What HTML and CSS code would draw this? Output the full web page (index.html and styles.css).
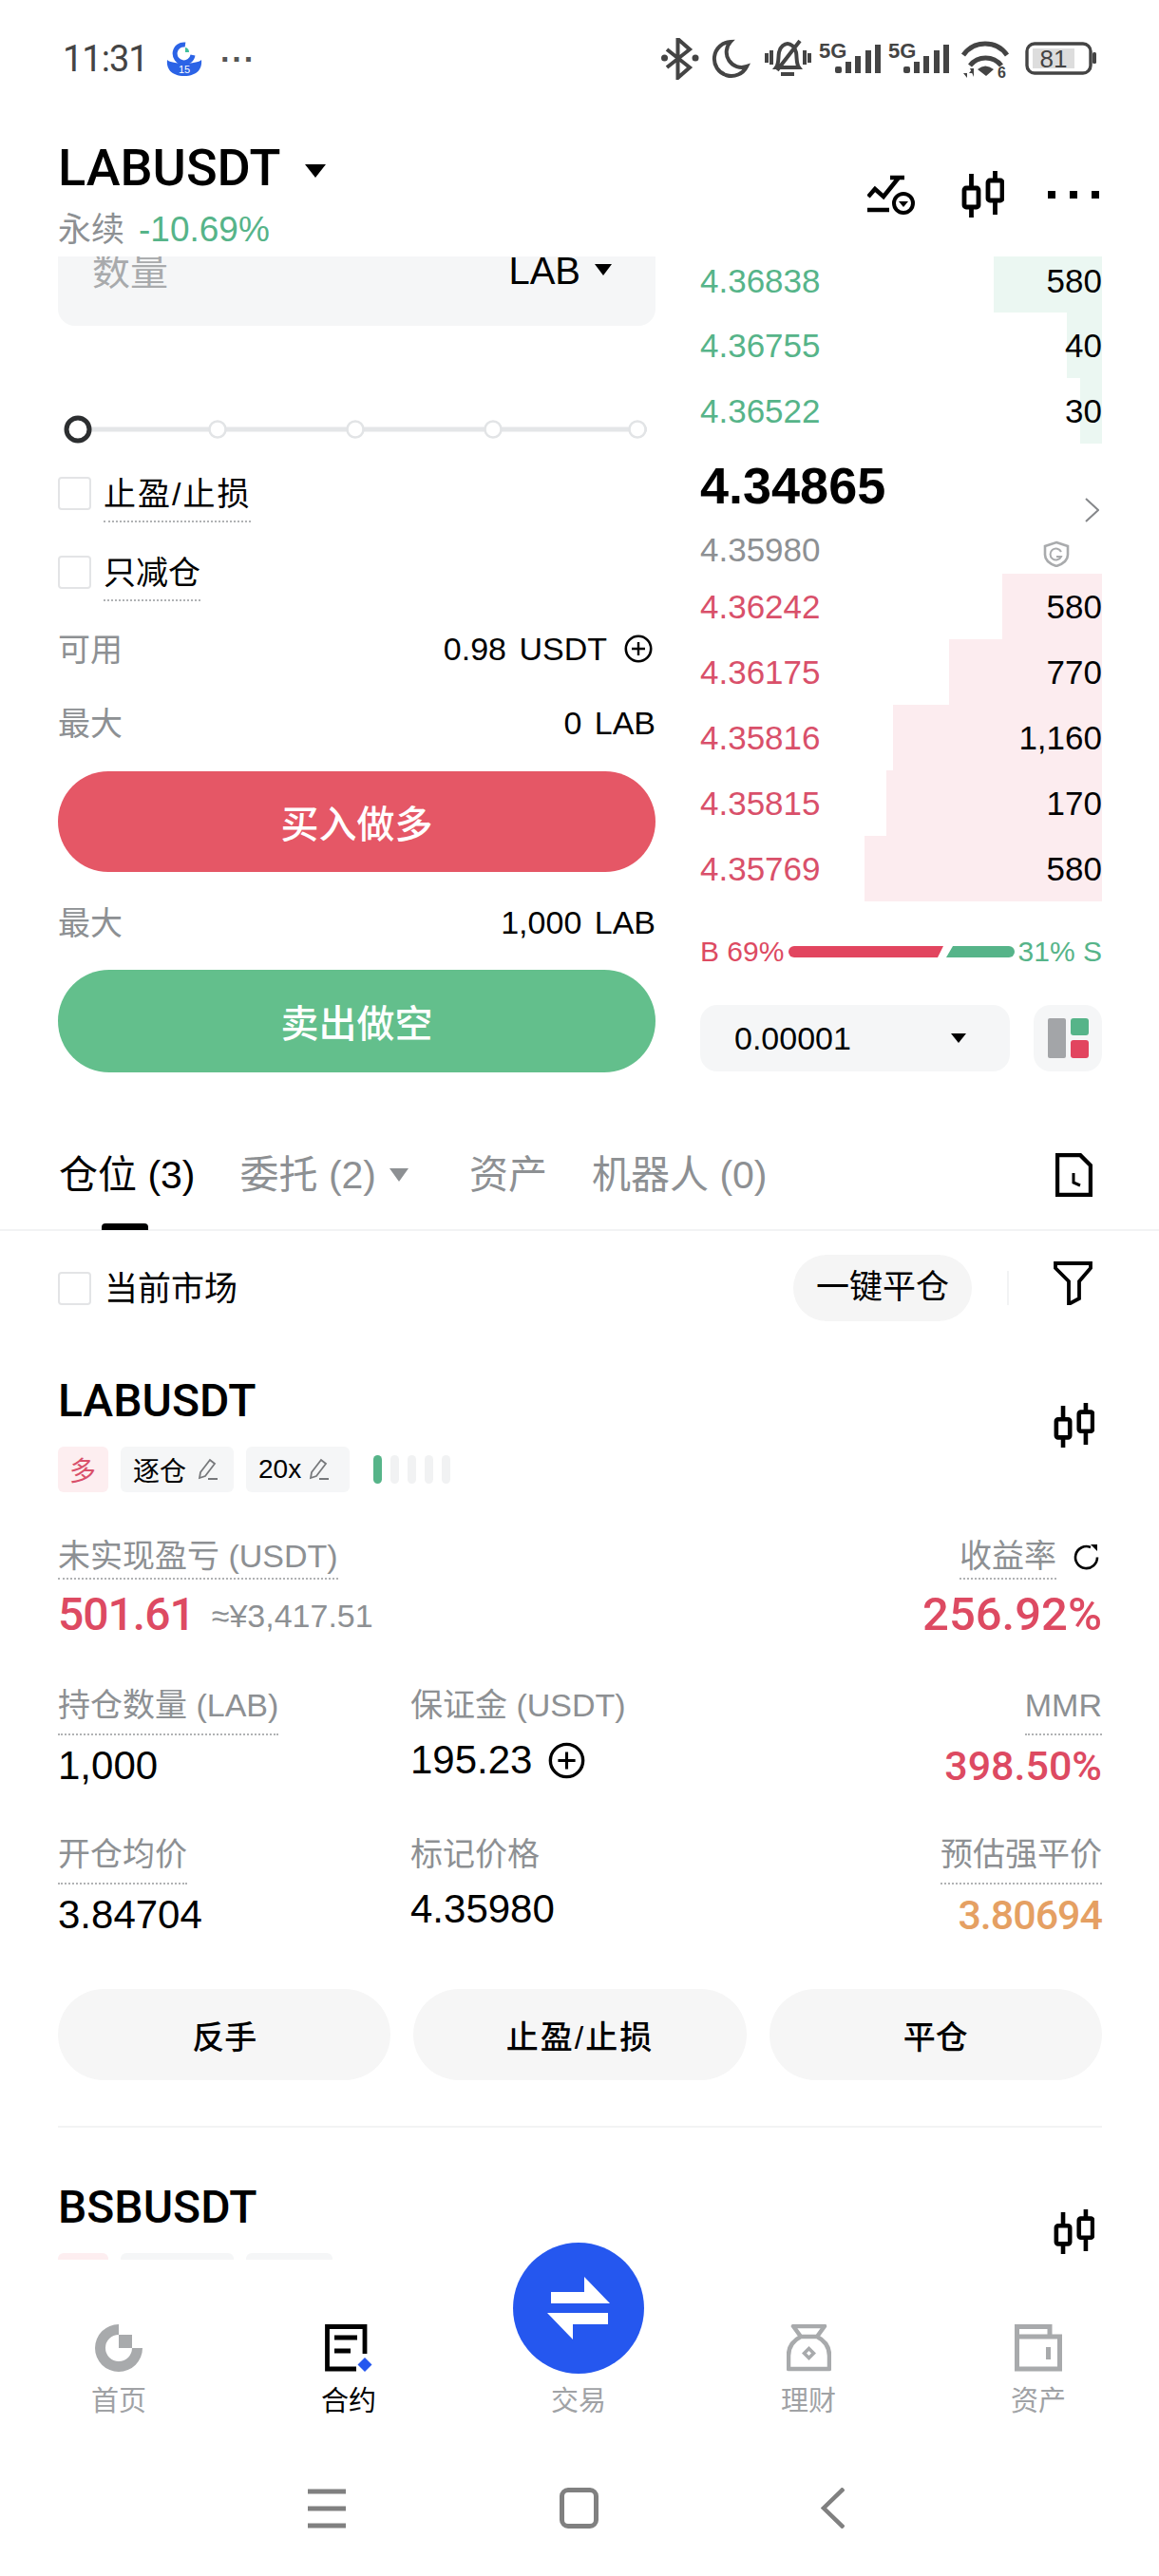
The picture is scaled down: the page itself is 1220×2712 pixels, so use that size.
FILE: index.html
```html
<!DOCTYPE html>
<html lang="zh-CN">
<head>
<meta charset="UTF-8">
<meta name="viewport" content="width=device-width, initial-scale=1.0">
<title>LABUSDT 永续</title>
<link rel="stylesheet" href="styles.css">
</head>
<body>
<svg class="defs" width="0" height="0">
    <symbol id="candles" viewBox="0 0 45 49">
        <g fill="none" stroke="#000" stroke-width="4.800">
            <rect x="3" y="18" width="15" height="20" rx="2"/>
            <rect x="28" y="10" width="15" height="21" rx="2"/>
            <path d="M10.500 3V18M10.500 38V49M35.500 0V10M35.500 31V46"/>
        </g>
    </symbol>
    <symbol id="pencil" viewBox="0 0 22 24">
        <path d="M3 15 13 2l5 4L8 19l-6 2zM11 22h10" fill="none" stroke="#77797c" stroke-width="1.800"/>
    </symbol>
    <symbol id="plus" viewBox="0 0 30 30">
        <circle cx="15" cy="15" r="13.200" fill="none" stroke="#000" stroke-width="2.600"/>
        <path d="M15 8v14M8 15h14" stroke="#000" stroke-width="2.400"/>
    </symbol>
</svg>

<div class="page">
    <div class="status">
        <span class="time">11:31</span>
        <svg class="app-icon" width="38" height="36" viewBox="0 0 38 36">
            <path d="M20 3A9.500 9.500 0 1 0 28 14" fill="none" stroke="#2b63e6" stroke-width="5"/>
            <path d="M20 6a5 5 0 0 1 4 5h-4z" fill="#3fbf9b"/>
            <path d="M1 19c5 5 31 5 36 0 1 9-4 17-18 17S0 28 1 19z" fill="#2b63e6"/>
            <text x="19" y="33" class="app-icon-text">15</text>
        </svg>
        <span class="status-dots">···</span>
        <svg class="status-icons" width="460" height="44" viewBox="0 0 460 44">
            <g fill="none" stroke="#444" stroke-width="4">
                <path d="M6 12 30 31 17.500 42V1L30 12 6 31"/>
                <path d="M73 4A18 18 0 1 0 90 30 16 16 0 0 1 73 4z"/>
                <path d="M121 31c3-4 2-10 3-16 1-6 6-9 9-9s8 3 9 9c1 6 0 12 3 16zM126 38h14M146 3 122 34M111 16v10M116 13v15M151 13v15M156 16v10"/>
                <path d="M318 18a28 28 0 0 1 46 0M325 29a21 21 0 0 1 33 0" stroke-width="5"/>
                <rect x="385" y="6" width="67" height="31" rx="8" stroke-width="3.400"/>
            </g>
            <g fill="#444">
                <circle cx="3.500" cy="21" r="3.500"/>
                <circle cx="36" cy="21" r="3.500"/>
                <rect x="183" y="30" width="7" height="7" rx="2"/>
                <rect x="194" y="25" width="6" height="12"/>
                <rect x="204" y="19" width="6" height="18"/>
                <rect x="215" y="13" width="6" height="24"/>
                <rect x="225" y="7" width="6" height="30"/>
                <rect x="255" y="30" width="7" height="7" rx="2"/>
                <rect x="266" y="25" width="6" height="12"/>
                <rect x="276" y="19" width="6" height="18"/>
                <rect x="287" y="13" width="6" height="24"/>
                <rect x="297" y="7" width="6" height="30"/>
                <path d="M333 33q8-7 17 0l-8 7zM318 37h4v5zM328 32v5h-4zM325 32h4v9z"/>
                <rect x="454" y="15" width="4" height="12" rx="1.500"/>
                <text x="166" y="21" class="status-text">5G</text>
                <text x="239" y="21" class="status-text">5G</text>
                <text x="354" y="42" class="status-six">6</text>
            </g>
            <rect x="391" y="11" width="44" height="21" fill="#ddd"/>
            <text x="413" y="31" class="battery-text">81</text>
        </svg>
    </div>

    <div class="header">
        <div class="header-left">
            <div class="title">LABUSDT <i class="caret caret-title"></i></div>
            <div class="subtitle">永续<span class="green change">-10.69%</span></div>
        </div>
        <div class="header-icons">
            <svg class="trend-icon" width="50" height="42" viewBox="0 0 50 42">
                <path d="M1 23 8 15 17 23 33 3M24 3H39M0 37H23" fill="none" stroke="#000" stroke-width="4.500"/>
                <circle cx="38" cy="30" r="10" fill="none" stroke="#000" stroke-width="4"/>
                <path d="M33 28h10l-5 6z"/>
            </svg>
            <svg width="45" height="49"><use href="#candles"/></svg>
            <svg width="54" height="10" viewBox="0 0 54 10">
                <rect x="0" y="1" width="8" height="8"/><rect x="23" y="1" width="8" height="8"/><rect x="46" y="1" width="8" height="8"/>
            </svg>
        </div>
    </div>

    <div class="trade">
        <div class="form">
            <div class="qty-box">
                <span class="qty-label">数量</span>
                <span class="qty-unit">LAB <i class="caret caret-small"></i></span>
            </div>
            <svg class="slider" width="629" height="30" viewBox="0 0 629 30">
                <path d="M20 15H620" stroke="#e4e6e8" stroke-width="5"/>
                <circle cx="21" cy="15" r="12" fill="#fff" stroke="#2c2e30" stroke-width="5"/>
                <circle cx="168" cy="15" r="8.500" fill="#fff" stroke="#e2e4e6" stroke-width="2.500"/>
                <circle cx="313" cy="15" r="8.500" fill="#fff" stroke="#e2e4e6" stroke-width="2.500"/>
                <circle cx="458" cy="15" r="8.500" fill="#fff" stroke="#e2e4e6" stroke-width="2.500"/>
                <circle cx="610" cy="15" r="8.500" fill="#fff" stroke="#e2e4e6" stroke-width="2.500"/>
            </svg>
            <div class="check-row first-check"><span class="checkbox"></span><span class="dotted check-label wide-slash">止盈/止损</span></div>
            <div class="check-row second-check"><span class="checkbox"></span><span class="dotted check-label">只减仓</span></div>
            <div class="info-row avail-row">
                <span class="muted">可用</span>
                <span class="info-value">0.98 USDT<svg class="avail-plus" width="30" height="30"><use href="#plus"/></svg></span>
            </div>
            <div class="info-row max-row">
                <span class="muted">最大</span>
                <span class="info-value">0 LAB</span>
            </div>
            <div class="big-btn btn-buy">买入做多</div>
            <div class="info-row max-row-2">
                <span class="muted">最大</span>
                <span class="info-value">1,000 LAB</span>
            </div>
            <div class="big-btn btn-sell">卖出做空</div>
        </div>

        <div class="book">
            <div class="book-row ask first-row"><i class="depth depth-ask" style="width:114px"></i><span class="price">4.36838</span><span class="qty">580</span></div>
            <div class="book-row ask"><i class="depth depth-ask" style="width:37px"></i><span class="price">4.36755</span><span class="qty">40</span></div>
            <div class="book-row ask"><i class="depth depth-ask" style="width:23px"></i><span class="price">4.36522</span><span class="qty">30</span></div>
            <div class="mid">
                <div class="mid-top">
                    <span class="last-price">4.34865</span>
                    <svg class="chevron" width="15" height="26" viewBox="0 0 15 26"><path d="M1 1 14 13 1 25" fill="none" stroke="#85878a" stroke-width="2"/></svg>
                </div>
                <div class="mid-bottom">
                    <span class="mark-price">4.35980</span>
                    <svg class="shield" width="28" height="28" viewBox="0 0 28 28">
                        <path d="M14 2 26 6v9c0 6-6 10-12 12C8 25 2 21 2 15V6z" fill="none" stroke="#a9abad" stroke-width="2.600"/>
                        <path d="M19 12a6 6 0 1 0 0 5h-5" fill="none" stroke="#a9abad" stroke-width="2"/>
                    </svg>
                </div>
            </div>
            <div class="book-row bid"><i class="depth depth-bid" style="width:105px"></i><span class="price">4.36242</span><span class="qty">580</span></div>
            <div class="book-row bid"><i class="depth depth-bid" style="width:161px"></i><span class="price">4.36175</span><span class="qty">770</span></div>
            <div class="book-row bid"><i class="depth depth-bid" style="width:220px"></i><span class="price">4.35816</span><span class="qty">1,160</span></div>
            <div class="book-row bid"><i class="depth depth-bid" style="width:227px"></i><span class="price">4.35815</span><span class="qty">170</span></div>
            <div class="book-row bid"><i class="depth depth-bid" style="width:250px"></i><span class="price">4.35769</span><span class="qty">580</span></div>
            <div class="ratio">
                <span class="red">B 69%</span>
                <svg class="ratio-bar" width="238" height="12" viewBox="0 0 238 12">
                    <path d="M6 0H163L157 12H6A6 6 0 0 1 6 0z" fill="#e2455f"/>
                    <path d="M173 0H232A6 6 0 0 1 232 12H166z" fill="#56b489"/>
                </svg>
                <span class="green">31% S</span>
            </div>
            <div class="book-tools">
                <div class="tick-select"><span>0.00001</span><i class="caret caret-tick"></i></div>
                <div class="layout-btn">
                    <svg width="43" height="42" viewBox="0 0 43 42">
                        <rect x="0" y="0" width="19" height="42" rx="2" fill="#a3a5a8"/>
                        <rect x="24" y="0" width="19" height="18" rx="3" fill="#56b489"/>
                        <rect x="24" y="23" width="19" height="19" rx="3" fill="#e2455f"/>
                    </svg>
                </div>
            </div>
        </div>
    </div>

    <div class="tabs">
        <span class="tab tab-on">仓位 (3)</span>
        <span class="tab tab-orders">委托 (2)<i class="caret caret-tab"></i></span>
        <span class="tab">资产</span>
        <span class="tab">机器人 (0)</span>
        <svg class="doc-icon" width="39" height="46" viewBox="0 0 39 46">
            <path d="M2 2H26L37 13V44H2z" fill="none" stroke="#000" stroke-width="4.400"/>
            <path d="M19 21V31L26 34" fill="none" stroke="#000" stroke-width="3"/>
        </svg>
        <i class="tab-line"></i>
    </div>

    <div class="positions">
        <div class="filter-row">
            <span class="checkbox"></span>
            <span class="filter-label">当前市场</span>
            <span class="pill">一键平仓</span>
            <i class="filter-sep"></i>
            <svg class="filter-icon" width="41" height="46" viewBox="0 0 41 46">
                <path d="M2 2H39V7L27 21V39L16 45V21L2 7z" fill="none" stroke="#000" stroke-width="3.800"/>
            </svg>
        </div>

        <div class="pos-head">
            <span class="symbol">LABUSDT</span>
            <svg class="pos-candles" width="43" height="49"><use href="#candles"/></svg>
        </div>
        <div class="tags">
            <span class="tag tag-long">多</span>
            <span class="tag tag-iso">逐仓<svg width="22" height="24"><use href="#pencil"/></svg></span>
            <span class="tag tag-lev">20x<svg width="22" height="24"><use href="#pencil"/></svg></span>
            <span class="risk"><i class="risk-on"></i><i></i><i></i><i></i><i></i></span>
        </div>

        <div class="stats">
            <div class="stat">
                <span class="dotted stat-label short-line">未实现盈亏 (USDT)</span>
                <div class="pnl-line"><span class="pnl pnl-tight red">501.61</span><span class="pnl-cny">≈¥3,417.51</span></div>
            </div>
            <div></div>
            <div class="stat stat-right">
                <span class="roe-line"><span class="dotted stat-label short-line">收益率</span>
                    <svg class="refresh" width="29" height="29" viewBox="0 0 29 29">
                        <path d="M19 4A11.500 11.500 0 1 0 26 14.500" fill="none" stroke="#000" stroke-width="2.600"/>
                        <path d="M19 1h7v7z"/>
                    </svg>
                </span>
                <div class="pnl red">256.92%</div>
            </div>

            <div class="stat">
                <span class="dotted stat-label">持仓数量 (LAB)</span>
                <div class="stat-value">1,000</div>
            </div>
            <div class="stat">
                <span class="stat-label plain">保证金 (USDT)</span>
                <div class="stat-value value-mid">195.23<svg class="margin-plus" width="39" height="39"><use href="#plus"/></svg></div>
            </div>
            <div class="stat stat-right">
                <span class="dotted stat-label">MMR</span>
                <div class="stat-value strong red">398.50%</div>
            </div>

            <div class="stat">
                <span class="dotted stat-label">开仓均价</span>
                <div class="stat-value">3.84704</div>
            </div>
            <div class="stat">
                <span class="stat-label plain">标记价格</span>
                <div class="stat-value value-mid">4.35980</div>
            </div>
            <div class="stat stat-right">
                <span class="dotted stat-label">预估强平价</span>
                <div class="stat-value strong orange">3.80694</div>
            </div>
        </div>

        <div class="pos-actions">
            <span class="action">反手</span>
            <span class="action wide-slash">止盈/止损</span>
            <span class="action">平仓</span>
        </div>
        <div class="pos-divider"></div>

        <div class="pos-head">
            <span class="symbol">BSBUSDT</span>
            <svg class="pos-candles" width="43" height="49"><use href="#candles"/></svg>
        </div>
        <div class="tags">
            <span class="tag tag-long"></span>
            <span class="tag tag-iso"></span>
            <span class="tag tag-lev tag-short"></span>
        </div>
    </div>

    <div class="nav">
        <div class="swap-btn">
            <svg width="66" height="66" viewBox="0 0 66 66">
                <path d="M4 16H39V0L66 28H4z M0 38H64V50H27V66z" fill="#fff"/>
            </svg>
        </div>
        <div class="nav-tabs">
            <div class="nav-item">
                <svg width="50" height="50" viewBox="0 0 50 50" fill="#a8aaac">
                    <path d="M25 0A25 25 0 1 0 50 25H39A14 14 0 1 1 25 11z"/>
                    <rect x="25" y="11" width="14" height="14"/>
                </svg>
                <span>首页</span>
            </div>
            <div class="nav-item nav-on">
                <svg width="50" height="50" viewBox="0 0 50 50">
                    <path d="M42 31V2.500H2.500V47H33" fill="none" stroke="#000" stroke-width="4.800"/>
                    <path d="M10 14H34M10 28H27" stroke="#000" stroke-width="5"/>
                    <path d="M42 35 49.500 42.500 42 50 34.500 42.500z" fill="#2557ef"/>
                </svg>
                <span>合约</span>
            </div>
            <div class="nav-item">
                <i class="nav-spacer"></i>
                <span>交易</span>
            </div>
            <div class="nav-item">
                <svg width="47" height="50" viewBox="0 0 47 50">
                    <path d="M7 2H40L32 13C40 17 45 23 45 33V47H2V33C2 23 7 17 15 13z M15 13H32" fill="none" stroke="#a8aaac" stroke-width="4.500" stroke-linejoin="round"/>
                    <path d="M23.500 23 31 30.500 23.500 38 16 30.500z" fill="#a8aaac"/>
                    <path d="M23.500 28 26 30.500 23.500 33 21 30.500z" fill="#fff"/>
                </svg>
                <span>理财</span>
            </div>
            <div class="nav-item">
                <svg width="50" height="50" viewBox="0 0 50 50">
                    <path d="M2.500 2.500H37V13H47.500V47H2.500zM2.500 13H37" fill="none" stroke="#a8aaac" stroke-width="5"/>
                    <rect x="33" y="24" width="5" height="13" fill="#a8aaac"/>
                </svg>
                <span>资产</span>
            </div>
        </div>
        <div class="sys-nav">
            <svg width="40" height="42" viewBox="0 0 40 42">
                <path d="M0 3H40M0 21H40M0 39H40" stroke="#808080" stroke-width="5"/>
            </svg>
            <i class="sys-home"></i>
            <svg class="sys-back" width="25" height="43" viewBox="0 0 25 43">
                <path d="M24 1 3 21.500 24 42" fill="none" stroke="#808080" stroke-width="4.500"/>
            </svg>
        </div>
    </div>
</div>
</body>
</html>
```
FILE: styles.css
```css
body {
    margin: 0;
    padding: 0;
    font-family: "Liberation Sans", "Noto Sans CJK SC", sans-serif;
    background: #fff;
    color: #000;
}

i {
    display: block;
}

svg {
    display: block;
    flex-shrink: 0;
}

.defs {
    position: absolute;
}

.page {
    width: 1220px;
    height: 2712px;
    overflow: hidden;
    display: flex;
    flex-direction: column;
}

.green {
    color: #56b489;
}

.red {
    color: #dd4a62;
}

.orange {
    color: #e5a063;
    letter-spacing: -1px;
}

.muted {
    color: #8d9093;
}

.caret {
    width: 0;
    height: 0;
    border-left: 10px solid transparent;
    border-right: 10px solid transparent;
    border-top: 14px solid #000;
}

.wide-slash {
    letter-spacing: 2px;
}

/* status bar */
.status {
    height: 96px;
    padding: 14px 66px 0 66px;
    display: flex;
    align-items: center;
}

.time {
    font-family: Roboto, "Liberation Sans", sans-serif;
    font-size: 38px;
    letter-spacing: -1px;
    color: #444;
    width: 109px;
}

.app-icon-text {
    font-size: 11px;
    fill: #fff;
    text-anchor: middle;
}

.status-dots {
    font-size: 34px;
    font-weight: bold;
    color: #555;
    margin-left: 19px;
    letter-spacing: 1px;
}

.status-icons {
    margin-left: auto;
    margin-right: -2px;
}

.status-text {
    font-size: 22px;
    font-weight: bold;
}

.status-six {
    font-size: 16px;
    font-weight: bold;
}

.battery-text {
    font-size: 26px;
    fill: #444;
    text-anchor: middle;
}

/* header */
.header {
    height: 160px;
    padding: 39px 63px 0 61px;
    box-sizing: border-box;
    display: flex;
    justify-content: space-between;
}

.title {
    font-family: Roboto, "Liberation Sans", sans-serif;
    font-size: 54px;
    font-weight: 500;
    line-height: 56px;
    display: flex;
    align-items: center;
}

.caret-title {
    margin-left: 26px;
    margin-top: 6px;
    border-left-width: 11px;
    border-right-width: 11px;
}

.subtitle {
    font-size: 35px;
    line-height: 40px;
    margin-top: 17px;
    color: #8d9093;
}

.change {
    font-size: 37px;
    margin-left: 15px;
}

.header-icons {
    display: flex;
    align-items: center;
    margin-top: 31px;
    height: 49px;
    gap: 46px;
}

.trend-icon {
    margin-right: 3px;
}

/* order form and book */
.trade {
    height: 859px;
    padding: 0 60px 0 61px;
    display: flex;
    justify-content: space-between;
}

.form {
    width: 629px;
}

.qty-box {
    height: 73px;
    box-sizing: border-box;
    padding: 0 46px 0 36px;
    background: #f5f6f7;
    border-radius: 0 0 18px 18px;
    display: flex;
    justify-content: space-between;
    font-size: 36px;
    line-height: 32px;
    overflow: hidden;
}

.qty-label {
    color: #a8aaac;
    font-size: 40px;
}

.qty-unit {
    font-size: 40px;
    line-height: 30px;
    display: flex;
}

.caret-small {
    margin-left: 15px;
    margin-top: 8px;
    border-left-width: 9px;
    border-right-width: 9px;
    border-top-width: 12px;
}

.slider {
    margin-top: 94px;
}

.check-row {
    display: flex;
    align-items: flex-start;
}

.first-check {
    margin-top: 35px;
}

.second-check {
    margin-top: 35px;
}

.checkbox {
    width: 35px;
    height: 35px;
    box-sizing: border-box;
    border: 2px solid #e3e4e6;
    border-radius: 4px;
    display: block;
    flex-shrink: 0;
}

.dotted {
    border-bottom: 2px dotted #b0b2b4;
}

.check-label {
    margin-left: 13px;
    font-size: 34px;
    line-height: 36px;
    padding-bottom: 10px;
}

.info-row {
    display: flex;
    justify-content: space-between;
    align-items: center;
    height: 40px;
    font-size: 34px;
}

.avail-row {
    margin-top: 28px;
}

.max-row {
    margin-top: 38px;
}

.max-row-2 {
    margin-top: 31px;
}

.info-value {
    display: flex;
    align-items: center;
    word-spacing: 4px;
    padding-top: 4px;
}

.avail-plus {
    margin-left: 18px;
    margin-right: 3px;
}

.big-btn {
    height: 107px;
    border-radius: 54px;
    color: #fff;
    font-size: 40px;
    font-weight: 500;
    display: flex;
    align-items: center;
    justify-content: center;
}

.btn-buy {
    height: 106px;
    background: #e55766;
    margin-top: 33px;
}

.btn-sell {
    height: 108px;
    background: #63bf8c;
    margin-top: 32px;
}

.book {
    width: 423px;
}

.book-row {
    position: relative;
    height: 69px;
    display: flex;
    justify-content: space-between;
    align-items: center;
    font-size: 35px;
}

.first-row {
    padding-bottom: 7px;
    height: 52px;
}

.ask .price {
    color: #56b489;
}

.bid .price {
    color: #d9506a;
}

.price,
.qty {
    position: relative;
}

.depth {
    position: absolute;
    top: 0;
    right: 0;
    bottom: 0;
}

.depth-ask {
    background: #ebf7f2;
}

.depth-bid {
    background: #fcecef;
}

.mid {
    height: 137px;
}

.mid-top {
    padding-top: 16px;
    display: flex;
    justify-content: space-between;
}

.last-price {
    font-size: 54px;
    font-weight: bold;
    line-height: 56px;
}

.chevron {
    margin-top: 41px;
    margin-right: 3px;
}

.mid-bottom {
    margin-top: 9px;
    display: flex;
    justify-content: space-between;
    align-items: center;
    height: 40px;
}

.mark-price {
    font-size: 35px;
    color: #8d9093;
}

.shield {
    margin-right: 34px;
    margin-top: 8px;
}

.ratio {
    margin-top: 33px;
    height: 40px;
    display: flex;
    justify-content: space-between;
    align-items: center;
    font-size: 30px;
    white-space: nowrap;
}

.ratio-bar {
    margin: 0 4px;
}

.book-tools {
    margin-top: 36px;
    display: flex;
    justify-content: space-between;
}

.tick-select {
    width: 326px;
    height: 70px;
    box-sizing: border-box;
    padding: 0 46px 0 36px;
    background: #f5f6f7;
    border-radius: 18px;
    display: flex;
    justify-content: space-between;
    align-items: center;
    font-size: 34px;
}

.caret-tick {
    border-left-width: 8px;
    border-right-width: 8px;
    border-top-width: 10px;
}

.layout-btn {
    width: 72px;
    height: 70px;
    background: #f5f6f7;
    border-radius: 18px;
    display: flex;
    align-items: center;
    justify-content: center;
}

/* tabs */
.tabs {
    position: relative;
    height: 167px;
    box-sizing: border-box;
    padding: 85px 70px 0 62px;
    border-bottom: 2px solid #f2f3f4;
    display: flex;
    align-items: flex-start;
    gap: 47px;
    font-size: 41px;
    line-height: 46px;
    color: #8d9093;
}

.tab {
    white-space: nowrap;
    display: flex;
    align-items: center;
}

.tab-on {
    color: #000;
}

.tab-orders {
    margin-right: 17px;
}

.caret-tab {
    margin-left: 14px;
    border-top-color: #8d9093;
}

.doc-icon {
    margin-left: auto;
}

.tab-line {
    position: absolute;
    left: 107px;
    bottom: -1px;
    width: 49px;
    height: 7px;
    background: #000;
    border-radius: 4px 4px 0 0;
}

/* positions */
.positions {
    flex: 1;
    min-height: 0;
    overflow: hidden;
    padding: 0 60px 0 61px;
}

.filter-row {
    margin-top: 25px;
    height: 70px;
    display: flex;
    align-items: center;
    padding-right: 10px;
}

.filter-label {
    margin-left: 14px;
    margin-top: -5px;
    font-size: 35px;
}

.pill {
    margin-left: auto;
    height: 70px;
    padding: 0 24px;
    background: #f5f5f5;
    border-radius: 35px;
    font-size: 35px;
    line-height: 68px;
}

.filter-sep {
    width: 2px;
    height: 36px;
    margin: 0 47px 0 37px;
    background: #f2f3f4;
}

.filter-icon {
    margin-top: -10px;
}

.pos-head {
    margin-top: 59px;
    height: 73px;
    display: flex;
    justify-content: space-between;
}

.symbol {
    font-family: Roboto, "Liberation Sans", sans-serif;
    font-size: 48px;
    font-weight: 500;
    line-height: 50px;
}

.pos-candles {
    margin-top: 26px;
    margin-right: 8px;
}

.tags {
    display: flex;
    align-items: center;
    gap: 13px;
    height: 48px;
}

.tag {
    height: 48px;
    box-sizing: border-box;
    padding: 0 13px;
    border-radius: 6px;
    background: #f5f6f7;
    font-size: 28px;
    display: flex;
    align-items: center;
    gap: 12px;
}

.tag-long {
    width: 53px;
    background: #fdeef0;
    color: #d9506a;
    padding: 0 12px;
}

.tag-iso {
    width: 119px;
}

.tag-lev {
    width: 109px;
    gap: 8px;
}

.tag-short {
    width: 91px;
}

.risk {
    display: flex;
    gap: 9px;
    margin-left: 12px;
}

.risk i {
    width: 9px;
    height: 30px;
    border-radius: 5px;
    background: #f1f2f3;
}

.risk .risk-on {
    background: #56b489;
}

.stats {
    margin-top: 49px;
    display: grid;
    grid-template-columns: 371px 1fr 1fr;
    row-gap: 52px;
}

.stat {
    display: flex;
    flex-direction: column;
    align-items: flex-start;
}

.stat-right {
    align-items: flex-end;
}

.stat-label {
    font-size: 34px;
    line-height: 36px;
    padding-bottom: 12px;
    color: #8d9093;
    white-space: nowrap;
}

.plain {
    padding-bottom: 14px;
}

.short-line {
    padding-bottom: 5px;
}

.pnl-line {
    display: flex;
    align-items: center;
    gap: 18px;
}

.pnl {
    font-family: Roboto, "Liberation Sans", sans-serif;
    font-size: 49px;
    font-weight: 500;
    line-height: 50px;
    margin-top: 12px;
}

.pnl-tight {
    font-size: 48px;
    letter-spacing: -1px;
}

.pnl-cny {
    margin-top: 14px;
    font-size: 34px;
    color: #8d9093;
}

.roe-line {
    display: flex;
    align-items: flex-start;
    gap: 17px;
}

.refresh {
    margin-top: 5px;
    margin-right: 2px;
}

.stat-value {
    font-size: 42px;
    line-height: 46px;
    margin-top: 9px;
    display: flex;
    align-items: center;
}

.value-mid {
    margin-top: 3px;
}

.strong {
    font-family: Roboto, "Liberation Sans", sans-serif;
    font-size: 43px;
    font-weight: 500;
}

.margin-plus {
    margin-left: 17px;
}

.pos-actions {
    margin-top: 55px;
    display: grid;
    grid-template-columns: repeat(3, 1fr);
    column-gap: 24px;
}

.action {
    height: 96px;
    border-radius: 48px;
    background: #f6f6f6;
    font-size: 34px;
    font-weight: 500;
    display: flex;
    align-items: center;
    justify-content: center;
}

.pos-divider {
    margin-top: 48px;
    height: 2px;
    background: #f2f3f4;
}

/* bottom navigation */
.nav {
    position: relative;
    height: 333px;
    flex-shrink: 0;
    background: #fff;
}

.swap-btn {
    position: absolute;
    left: 540px;
    top: -18px;
    width: 138px;
    height: 138px;
    border-radius: 50%;
    background: #2557ef;
    display: flex;
    align-items: center;
    justify-content: center;
}

.nav-tabs {
    padding: 68px 6px 0 4px;
    display: grid;
    grid-template-columns: repeat(5, 1fr);
}

.nav-item {
    display: flex;
    flex-direction: column;
    align-items: center;
    font-size: 29px;
    color: #a0a2a5;
}

.nav-item span {
    line-height: 36px;
    margin-top: 13px;
}

.nav-on {
    color: #000;
}

.nav-spacer {
    height: 50px;
}

.sys-nav {
    margin-top: 73px;
    padding-left: 324px;
    display: flex;
    align-items: center;
    gap: 225px;
}

.sys-home {
    width: 41px;
    height: 43px;
    box-sizing: border-box;
    border: 5px solid #808080;
    border-radius: 9px;
}

.sys-back {
    margin-left: 9px;
}
```
